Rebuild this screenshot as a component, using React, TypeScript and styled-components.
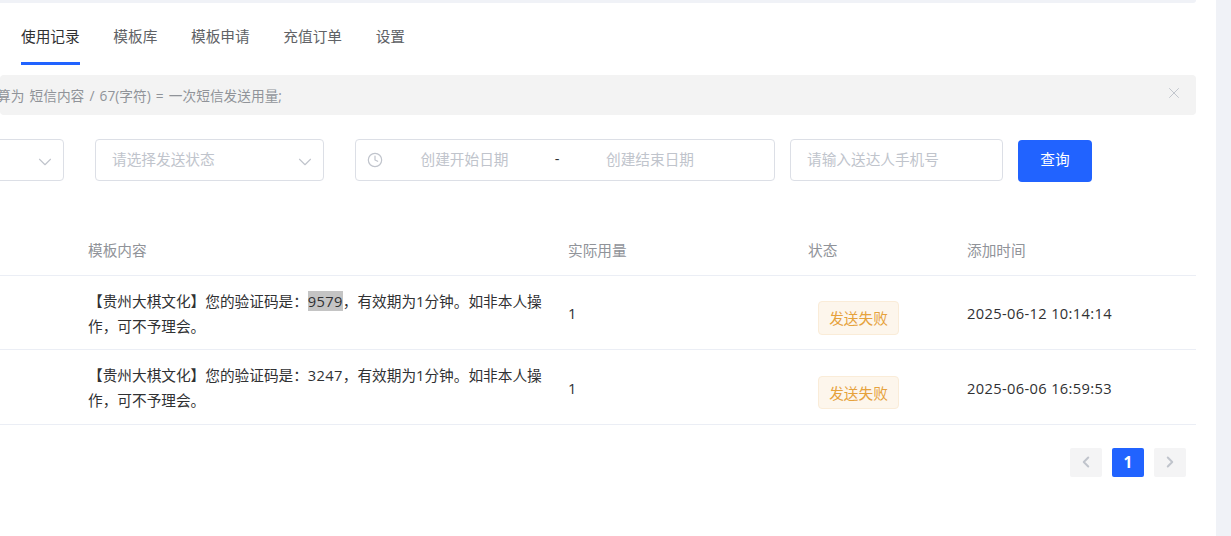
import React from "react";
import styled, { createGlobalStyle } from "styled-components";
import { ChevronDown, ChevronLeft, ChevronRight, Clock, X } from "lucide-react";

const GlobalStyle = createGlobalStyle`
  html, body {
    margin: 0;
    padding: 0;
    height: 100%;
    overflow: hidden;
    background: #fff;
    font-family: "Open Sans", "Noto Sans CJK SC", "Liberation Sans", sans-serif;
    font-size: 14.67px;
    color: #303133;
  }
`;

const Page = styled.div`
  display: flex;
  height: 536px;
  width: 1231px;
  overflow: hidden;
  background: #f0f2f7;
`;

const Card = styled.div`
  width: 1216px;
  background: #fff;
  display: flex;
  flex-direction: column;
  overflow: hidden;
`;

const TopStrip = styled.div`
  height: 3px;
  width: 1196px;
  background: #f0f2f7;
  border-bottom-right-radius: 4px;
`;

const Body = styled.div`
  width: 1196px;
  display: flex;
  flex-direction: column;
`;

const Tabs = styled.div`
  display: flex;
  gap: 33.7px;
  height: 62px;
  padding-left: 21px;
`;

const Tab = styled.div<{ $active?: boolean }>`
  height: 62px;
  box-sizing: border-box;
  line-height: 67px;
  color: ${({ $active }) => ($active ? "#303133" : "#606266")};
  border-bottom: 3px solid ${({ $active }) => ($active ? "#2163ff" : "transparent")};
`;

const Alert = styled.div`
  margin-top: 10px;
  height: 40px;
  background: #f3f3f3;
  border-radius: 4px;
  display: flex;
  align-items: center;
  justify-content: space-between;
  padding: 0 13px 0 0;
  color: #909399;
  font-size: 13.7px;
  word-spacing: 1.6px;
`;

const AlertText = styled.span`
  margin-left: -3px;
  white-space: nowrap;
`;

const AlertClose = styled(X)`
  margin-top: -4px;
  color: #c0c4cc;
`;

const Filters = styled.div`
  margin-top: 24px;
  display: flex;
  justify-content: flex-end;
  align-items: flex-start;
  padding-right: 104px;
  height: 43px;
`;

const Field = styled.div<{ $w: number; $ml: number }>`
  flex: none;
  width: ${({ $w }) => $w}px;
  margin-left: ${({ $ml }) => $ml}px;
  height: 42px;
  box-sizing: border-box;
  border: 1px solid #dcdfe6;
  border-radius: 4px;
  display: flex;
  align-items: center;
  color: #c0c4cc;
  background: #fff;
`;

const Placeholder = styled.span`
  padding: 0 0 4px 16px;
  flex: 1;
  color: #c0c4cc;
`;

const Chevron = styled(ChevronDown)`
  margin: 3px 7px 0 0;
  color: #c0c4cc;
`;

const ClockIcon = styled(Clock)`
  flex: none;
  margin: 0 0 0 11px;
  color: #c0c4cc;
`;

const DateText = styled.span<{ $w: number }>`
  width: ${({ $w }) => $w}px;
  padding-bottom: 4px;
  text-align: center;
`;

const Dash = styled.span`
  width: 22px;
  padding-bottom: 4px;
  text-align: center;
  color: #303133;
`;

const SearchButton = styled.button`
  flex: none;
  width: 74px;
  height: 42px;
  margin: 1px 0 0 15px;
  padding: 0 0 6px;
  border: none;
  border-radius: 4px;
  background: #2163ff;
  color: #fff;
  font: inherit;
`;

const Table = styled.div`
  margin-top: 43px;
`;

const Row = styled.div<{ $head?: boolean }>`
  display: grid;
  grid-template-columns: 88px 480px 240px 159px 229px;
  align-items: center;
  height: ${({ $head }) => ($head ? "50px" : "73.4px")};
  border-bottom: 1px solid #ebeef5;
`;

const HeadCell = styled.div`
  line-height: 51px;
  color: #909399;
`;

const Cell = styled.div`
  line-height: 25px;
  padding-top: 2px;
`;

const Content = styled(Cell)`
  padding-right: 22px;
`;

const TimeCell = styled(Cell)`
  letter-spacing: 0.35px;
`;

const Code = styled.span<{ $selected: boolean }>`
  letter-spacing: 0.35px;
  background: ${({ $selected }) => ($selected ? "#c4c4c4" : "transparent")};
`;

const BadgeCell = styled.div`
  align-self: start;
  padding-top: 25.4px;
`;

const Badge = styled.div`
  margin-left: 10px;
  width: 81px;
  height: 33.4px;
  line-height: 32px;
  box-sizing: border-box;
  text-align: center;
  background: #fdf6ec;
  border: 1px solid #faecd8;
  border-radius: 4px;
  color: #e6a23c;
`;

const Pager = styled.div`
  margin-top: 23px;
  padding-right: 10px;
  display: flex;
  justify-content: flex-end;
  gap: 10px;
`;

const PageButton = styled.div<{ $active?: boolean }>`
  width: 32px;
  height: 29px;
  border-radius: 2px;
  display: flex;
  align-items: center;
  justify-content: center;
  background: ${({ $active }) => ($active ? "#2163ff" : "#f4f4f5")};
  color: ${({ $active }) => ($active ? "#fff" : "#c0c4cc")};
  font-size: 15.5px;
  font-weight: 700;
`;

const tabs = ["使用记录", "模板库", "模板申请", "充值订单", "设置"];

const records = [
  { code: "9579", selected: true, time: "2025-06-12 10:14:14" },
  { code: "3247", selected: false, time: "2025-06-06 16:59:53" },
];

export default function App() {
  return (
    <Page>
      <GlobalStyle />
      <Card>
        <TopStrip />
        <Body>
          <Tabs>
            {tabs.map((t, i) => (
              <Tab key={t} $active={i === 0}>
                {t}
              </Tab>
            ))}
          </Tabs>
          <Alert>
            <AlertText>算为 短信内容 / 67(字符) = 一次短信发送用量;</AlertText>
            <AlertClose size={18} strokeWidth={1.3} />
          </Alert>
          <Filters>
            <Field $w={229} $ml={0}>
              <Placeholder />
              <Chevron size={22} strokeWidth={1.2} />
            </Field>
            <Field $w={229} $ml={31}>
              <Placeholder>请选择发送状态</Placeholder>
              <Chevron size={22} strokeWidth={1.2} />
            </Field>
            <Field $w={420} $ml={31}>
              <ClockIcon size={16} strokeWidth={1.8} />
              <DateText $w={163}>创建开始日期</DateText>
              <Dash>-</Dash>
              <DateText $w={164}>创建结束日期</DateText>
            </Field>
            <Field $w={213} $ml={15}>
              <Placeholder>请输入送达人手机号</Placeholder>
            </Field>
            <SearchButton>查询</SearchButton>
          </Filters>
          <Table>
            <Row $head>
              <div />
              <HeadCell>模板内容</HeadCell>
              <HeadCell>实际用量</HeadCell>
              <HeadCell>状态</HeadCell>
              <HeadCell>添加时间</HeadCell>
            </Row>
            {records.map((r) => (
              <Row key={r.code}>
                <div />
                <Content>
                  【贵州大棋文化】您的验证码是：
                  <Code $selected={r.selected}>{r.code}</Code>
                  ，有效期为1分钟。如非本人操作，可不予理会。
                </Content>
                <Cell>1</Cell>
                <BadgeCell>
                  <Badge>发送失败</Badge>
                </BadgeCell>
                <TimeCell>{r.time}</TimeCell>
              </Row>
            ))}
          </Table>
          <Pager>
            <PageButton>
              <ChevronLeft size={18} strokeWidth={2.6} />
            </PageButton>
            <PageButton $active>1</PageButton>
            <PageButton>
              <ChevronRight size={18} strokeWidth={2.6} />
            </PageButton>
          </Pager>
        </Body>
      </Card>
    </Page>
  );
}
